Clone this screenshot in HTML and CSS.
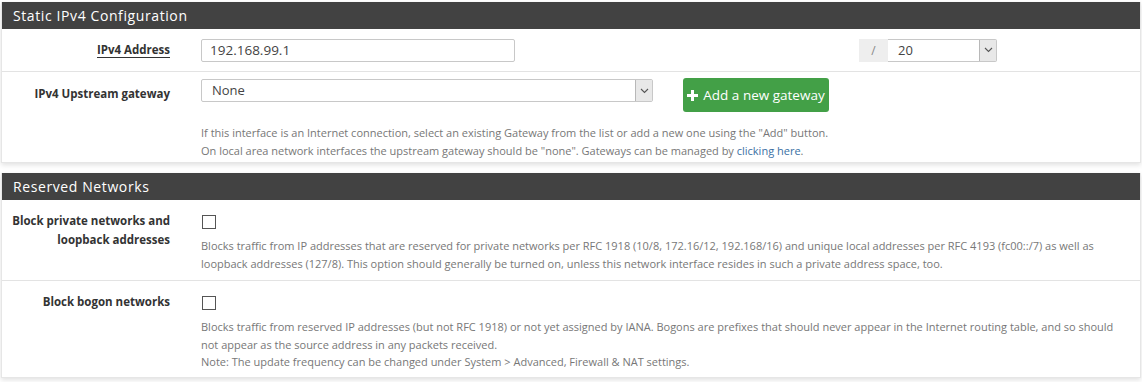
FILE: index.html
```html
<!DOCTYPE html>
<html lang="en">
<head>
    <meta charset="UTF-8">
    <title>Interfaces: LAN</title>
    <link rel="stylesheet" href="styles.css">
</head>
<body>

    <!-- Static IPv4 -->
    <div class="panel">
        <div class="panel-heading">Static IPv4 Configuration</div>

        <div class="form-row row-address">
            <div class="form-label"><span class="underline">IPv4 Address</span></div>
            <div class="form-field">
                <div class="text-input addr-input">192.168.99.1</div>
                <div class="cidr">
                    <span class="addon">/</span>
                    <div class="fake-select cidr-select">
                        <span class="sel-value">20</span>
                        <span class="sel-arrow"><svg width="9" height="6" viewBox="0 0 9 6"><path d="M1 1 L4.5 4.5 L8 1" fill="none" stroke="#555" stroke-width="1.1"/></svg></span>
                    </div>
                </div>
            </div>
        </div>

        <div class="form-row row-gateway">
            <div class="form-label">IPv4 Upstream gateway</div>
            <div class="form-field column">
                <div class="gateway-line">
                    <div class="fake-select gw-select">
                        <span class="sel-value">None</span>
                        <span class="sel-arrow"><svg width="9" height="6" viewBox="0 0 9 6"><path d="M1 1 L4.5 4.5 L8 1" fill="none" stroke="#555" stroke-width="1.1"/></svg></span>
                    </div>
                    <button class="btn-success"><svg width="11" height="11" viewBox="0 0 11 11"><path d="M4 0h3v4h4v3H7v4H4V7H0V4h4z" fill="#fff"/></svg> Add a new gateway</button>
                </div>
                <div class="help">
                    If this interface is an Internet connection, select an existing Gateway from the list or add a new one using the "Add" button.<br>
                    On local area network interfaces the upstream gateway should be "none". Gateways can be managed by <a href="#">clicking here</a>.
                </div>
            </div>
        </div>
    </div>

    <!-- Reserved Networks -->
    <div class="panel">
        <div class="panel-heading">Reserved Networks</div>

        <div class="form-row row-private">
            <div class="form-label">Block private networks and<br>loopback addresses</div>
            <div class="form-field column">
                <input type="checkbox" class="check">
                <div class="help">
                    Blocks traffic from IP addresses that are reserved for private networks per RFC 1918 (10/8, 172.16/12, 192.168/16) and unique local addresses per RFC 4193 (fc00::/7) as well as loopback addresses (127/8). This option should generally be turned on, unless this network interface resides in such a private address space, too.
                </div>
            </div>
        </div>

        <div class="form-row row-bogon">
            <div class="form-label">Block bogon networks</div>
            <div class="form-field column">
                <input type="checkbox" class="check">
                <div class="help">
                    Blocks traffic from reserved IP addresses (but not RFC 1918) or not yet assigned by IANA. Bogons are prefixes that should never appear in the Internet routing table, and so should not appear as the source address in any packets received.<br>
                    Note: The update frequency can be changed under System &gt; Advanced, Firewall &amp; NAT settings.
                </div>
            </div>
        </div>
    </div>

</body>
</html>
```

FILE: styles.css
```css
* {
    margin: 0;
    padding: 0;
    box-sizing: border-box;
}

body {
    font-family: "Open Sans", "Noto Sans", sans-serif;
    font-size: 12px;
    color: #333;
    background: #fff;
    padding: 2px 1px 0 1px;
    width: 1142px;
    height: 382px;
    overflow: hidden;
}

/* Panels */
.panel {
    background: #fff;
    border: 1px solid #e6e6e6;
    border-top: none;
    box-shadow: 0 2px 5px rgba(0, 0, 0, 0.12);
    margin-bottom: 10px;
}

.panel-heading {
    background: #424242;
    color: #fff;
    font-size: 14px;
    height: 27px;
    line-height: 27px;
    padding-left: 11px;
    letter-spacing: 0.6px;
}

/* Rows */
.form-row {
    display: grid;
    grid-template-columns: 184px 1fr;
    border-top: 1px solid #e3e3e3;
}

.panel-heading + .form-row {
    border-top: none;
}

.form-label {
    text-align: right;
    font-weight: bold;
    font-size: 11.5px;
    padding-right: 16px;
    line-height: 19px;
    color: #333;
}

.underline {
    border-bottom: 1px solid #333;
}

.form-field {
    display: flex;
    align-items: center;
    padding-left: 15px;
    padding-right: 12px;
}

.form-field.column {
    flex-direction: column;
    align-items: flex-start;
}

.row-address {
    height: 42px;
}

.row-address .form-label {
    padding-top: 11px;
}

.row-gateway {
    height: 91px;
}

.row-gateway .form-label {
    padding-top: 12px;
}

.row-gateway .form-field {
    padding-top: 6px;
}

.row-private {
    height: 80px;
}

.row-private .form-label,
.row-bogon .form-label {
    padding-top: 11px;
}

.row-private .form-field,
.row-bogon .form-field {
    padding-top: 15px;
}

.row-bogon {
    height: 97px;
}

/* Inputs */
.text-input {
    height: 23px;
    border: 1px solid #c8c8c8;
    border-radius: 2px;
    padding: 0 8px;
    line-height: 21px;
    font-size: 13.5px;
    color: #444;
}

.addr-input {
    width: 314px;
}

.cidr {
    display: flex;
    margin-left: 344px;
}

.addon {
    width: 29px;
    height: 23px;
    background: #eee;
    color: #888;
    text-align: center;
    line-height: 23px;
    font-size: 12px;
}

.fake-select {
    display: flex;
    height: 23px;
    border: 1px solid #c8c8c8;
    border-radius: 2px;
    font-size: 13px;
    color: #444;
}

.sel-value {
    flex: 1;
    padding-left: 10px;
    line-height: 21px;
}

.sel-arrow {
    width: 17px;
    background: #e8e8e8;
    border-left: 1px solid #b8b8b8;
    display: flex;
    align-items: center;
    justify-content: center;
}

.cidr-select {
    width: 109px;
    border-left: none;
    border-radius: 0 2px 2px 0;
}

.gateway-line {
    display: flex;
    align-items: flex-start;
}

.gw-select {
    width: 452px;
    margin-top: 1px;
}

.btn-success {
    margin-left: 30px;
    background: #43a047;
    color: #fff;
    border: none;
    border-radius: 3px;
    height: 34px;
    width: 146px;
    font-family: inherit;
    font-size: 13.5px;
    display: flex;
    align-items: center;
    justify-content: center;
    gap: 5px;
}

.help {
    color: #777;
    font-size: 11px;
    line-height: 17.5px;
    margin-top: 12px;
}

.help a {
    color: #3a6fa4;
    text-decoration: none;
}

.row-private .help,
.row-bogon .help {
    margin-top: 8px;
}

.check {
    appearance: none;
    width: 14px;
    height: 14px;
    border: 1px solid #555;
    background: #fff;
    margin-left: 1px;
}
```
